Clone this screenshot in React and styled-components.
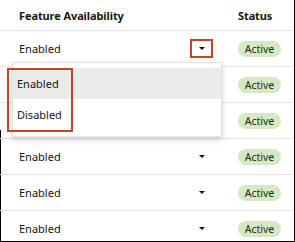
import React from 'react';
import styled, { createGlobalStyle } from 'styled-components';

const GlobalStyle = createGlobalStyle`
  html, body {
    margin: 0;
    padding: 0;
    background: #ffffff;
  }
  body {
    font-family: "Noto Sans", "Open Sans", sans-serif;
    color: #161513;
  }
`;

const Frame = styled.div`
  position: relative;
  width: 295px;
  height: 242px;
  box-sizing: border-box;
  border-right: 1px solid #000000;
  border-bottom: 1px solid #000000;
  overflow: hidden;
  background: #ffffff;

  &:before {
    position: absolute;
    content: '';
    left: 0;
    top: 130px;
    bottom: 0;
    width: 1px;
    background: #000000;
  }
`;

const Row = styled.div`
  position: relative;
  display: grid;
  grid-template-columns: 1fr 23px 56px;
  column-gap: 25px;
  align-items: center;
  box-sizing: border-box;
  height: ${(p) => (p.$header ? '31px' : '36px')};
  padding-left: 19px;
  border-bottom: 1px solid #e4e4e4;
  font-size: 11px;
  font-weight: ${(p) => (p.$header ? 700 : 400)};
  letter-spacing: ${(p) => (p.$header ? '-0.1px' : '0')};
`;

const Cell = styled.div`
  white-space: nowrap;
  visibility: ${(p) => (p.$covered ? 'hidden' : 'visible')};
`;

const CaretButton = styled.div`
  display: flex;
  align-items: center;
  justify-content: center;
  box-sizing: border-box;
  width: 23px;
  height: 19px;
  margin-top: -1px;
  border: 2px solid ${(p) => (p.$marked ? '#c04428' : 'transparent')};
`;

const Caret = styled.span`
  width: 0;
  height: 0;
  border-left: 3px solid transparent;
  border-right: 3px solid transparent;
  border-top: 3.5px solid #161513;
`;

const Badge = styled.span`
  display: inline-flex;
  align-items: center;
  justify-content: center;
  width: 43px;
  height: 16px;
  border-radius: 8px;
  background: #d5eac2;
  color: #1d2b12;
  font-size: 10.5px;
  font-weight: 400;
  letter-spacing: 0;
`;

const Menu = styled.div`
  position: absolute;
  z-index: 2;
  top: 31px;
  left: 12px;
  width: 210px;
  box-sizing: border-box;
  padding: 5px 0 6px;
  background: #ffffff;
  border: 1px solid #e2e2e2;
  box-shadow: 0 3px 6px rgba(0, 0, 0, 0.18);
`;

const MenuItem = styled.div`
  display: flex;
  align-items: center;
  height: 31px;
  padding-left: 4px;
  font-size: 11px;
  background: ${(p) => (p.$active ? '#ebebea' : 'transparent')};
`;

const Annotation = styled.div`
  position: absolute;
  left: -6px;
  top: 5px;
  width: 66px;
  height: 64px;
  box-sizing: border-box;
  border: 2px solid #c04428;
  pointer-events: none;
`;

const rows = Array.from({ length: 6 }, (_, i) => i);

const App = () => (
  <>
    <GlobalStyle />
    <Frame>
      <Row $header>
        <Cell>Feature Availability</Cell>
        <Cell />
        <Cell>Status</Cell>
      </Row>
      {rows.map((i) => (
        <Row key={i}>
          <Cell $covered={i === 1 || i === 2}>Enabled</Cell>
          <CaretButton $marked={i === 0}>
            <Caret />
          </CaretButton>
          <Cell>
            <Badge>Active</Badge>
          </Cell>
          {i === 0 && (
            <Menu>
              <MenuItem $active>Enabled</MenuItem>
              <MenuItem>Disabled</MenuItem>
              <Annotation />
            </Menu>
          )}
        </Row>
      ))}
    </Frame>
  </>
);

export default App;
